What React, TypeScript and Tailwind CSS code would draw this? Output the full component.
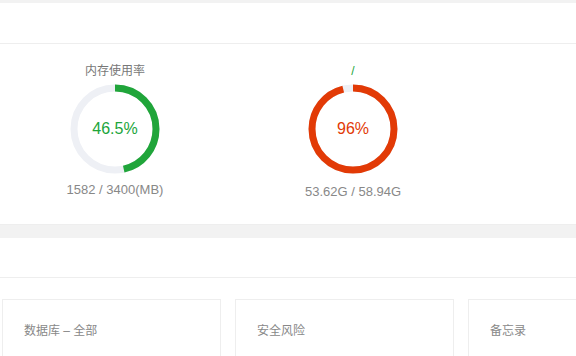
import React from "react";

const Ring = ({ pct, color, label }: { pct: number; color: string; label: string }) => {
  const r = 41;
  const c = 2 * Math.PI * r;
  return (
    <div className="relative w-[90px] h-[90px]">
      <svg width="90" height="90" viewBox="0 0 90 90" className="-rotate-90">
        <circle cx="45" cy="45" r={r} fill="none" stroke="#eef0f5" strokeWidth="7" />
        <circle
          cx="45"
          cy="45"
          r={r}
          fill="none"
          stroke={color}
          strokeWidth="7"
          strokeDasharray={`${(c * pct) / 100} ${c}`}
        />
      </svg>
      <div className="absolute inset-0 flex items-center justify-center text-[16px]" style={{ color }}>
        {label}
      </div>
    </div>
  );
};

const cards = ["数据库 – 全部", "安全风险", "备忘录"];

export default function App() {
  return (
    <div
      className="w-[576px] h-[356px] overflow-hidden bg-[#f2f2f2] pt-[3px]"
      style={{ fontFamily: '"Liberation Sans", "Noto Sans CJK SC", sans-serif' }}
    >
      {/* header bar */}
      <div className="h-[41px] bg-white border-b border-[#eeeeee]" />

      {/* status charts */}
      <div className="h-[181px] bg-white border-b border-[#eeeeee] flex -ml-1 pt-[20px]">
        <div className="w-[238px] flex flex-col items-center">
          <div className="text-[12px] leading-[14px] text-[#777]">内存使用率</div>
          <div className="mt-[6px]">
            <Ring pct={46.5} color="#20a53a" label="46.5%" />
          </div>
          <div className="mt-[9px] text-[13px] leading-[14px] text-[#888]">1582 / 3400(MB)</div>
        </div>
        <div className="w-[238px] flex flex-col items-center">
          <div className="text-[12px] leading-[14px] text-[#20a53a]">/</div>
          <div className="mt-[6px]">
            <Ring pct={96} color="#e23a06" label="96%" />
          </div>
          <div className="mt-[11px] text-[13px] leading-[14px] text-[#888]">53.62G / 58.94G</div>
        </div>
      </div>

      <div className="h-[13px]" />

      {/* second panel */}
      <div className="bg-white h-[200px]">
        <div className="h-[40px] border-b border-[#eeeeee]" />
        <div className="flex gap-[14px] pl-[2px] pt-[21px]">
          {cards.map((t) => (
            <div key={t} className="w-[219px] shrink-0 h-[80px] border border-[#eeeeee] pl-[21px] pt-[24px]">
              <div className="text-[12px] leading-[14px] text-[#888]">{t}</div>
            </div>
          ))}
        </div>
      </div>
    </div>
  );
}
